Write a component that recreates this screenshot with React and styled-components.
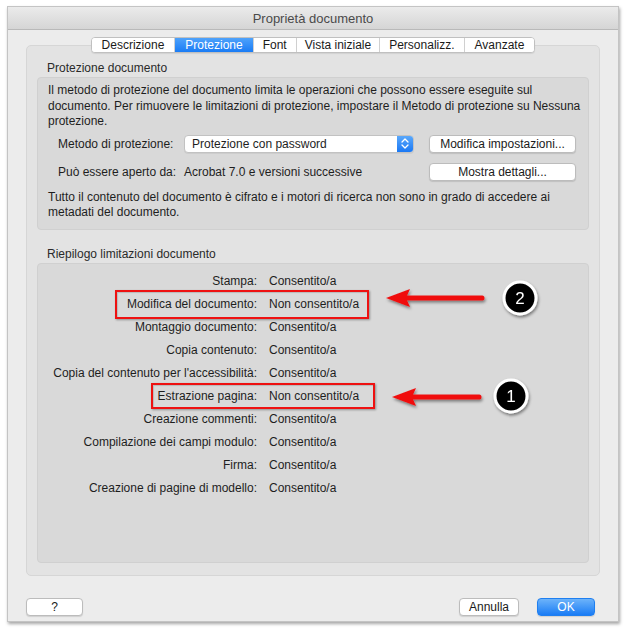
import React from "react";
import styled, { createGlobalStyle } from "styled-components";

const Global = createGlobalStyle`
  html, body { margin: 0; padding: 0; background: #ffffff; }
  body {
    font-family: "Liberation Sans", Arial, sans-serif;
    font-size: 12px;
    color: #1e1e1e;
  }
  #root { padding: 6px 7px 8px 7px; }
`;

const Window = styled.div`
  width: 612px;
  height: 616px;
  box-sizing: border-box;
  background: #ececec;
  border: 1px solid #c4c4c4;
  box-shadow: 1px 2px 3px rgba(0, 0, 0, 0.35);
  display: flex;
  flex-direction: column;
  position: relative;
`;

const TitleBar = styled.div`
  height: 22px;
  flex: none;
  background: linear-gradient(#ebebeb, #d5d5d5);
  border-bottom: 1px solid #b9b9b9;
  display: flex;
  align-items: center;
  justify-content: center;
  font-size: 13px;
  color: #4a4a4a;
`;

const Body = styled.div`
  flex: 1;
  display: flex;
  flex-direction: column;
  padding: 7px 18px 0 18px;
`;

const TabStrip = styled.div`
  display: flex;
  justify-content: center;
  position: relative;
  z-index: 2;
  margin-bottom: -8px;
`;

const TabGroup = styled.div`
  display: flex;
  background: #fff;
  border: 1px solid #c0c0c0;
  border-radius: 4px;
  overflow: hidden;
  box-shadow: 0 1px 1px rgba(0, 0, 0, 0.08);
`;

const Tab = styled.div`
  height: 14px;
  padding: 0 ${(p) => p.$pad}px;
  display: flex;
  align-items: center;
  font-size: 12px;
  color: ${(p) => (p.$active ? "#ffffff" : "#1a1a1a")};
  background: ${(p) => (p.$active ? "linear-gradient(#4ea2fb, #1a7cf5)" : "#ffffff")};
  border-left: ${(p) => (p.$first ? "none" : "1px solid #d0d0d0")};
`;

const Panel = styled.div`
  height: 531px;
  flex: none;
  box-sizing: border-box;
  background: #e3e3e3;
  border: 1px solid #d6d6d6;
  border-radius: 5px;
  padding: 15px 10px 0 10px;
  display: flex;
  flex-direction: column;
`;

const SectionLabel = styled.div`
  padding-left: 10px;
  height: 15px;
  line-height: 15px;
  margin-bottom: 1px;
  color: #2a2a2a;
`;

const GroupBox = styled.div`
  background: #d9d9d9;
  border: 1px solid #d0d0d0;
  border-radius: 4px;
  box-sizing: border-box;
  height: ${(p) => p.$h}px;
  padding: ${(p) => p.$pad};
  position: relative;
  margin-bottom: ${(p) => p.$mb || 0}px;
`;

const Para = styled.p`
  margin: 0 -6px 0 0;
  line-height: 15.5px;
`;

const FormGrid = styled.div`
  display: grid;
  grid-template-columns: 126px 230px 147px;
  column-gap: 0;
  row-gap: 10px;
  padding-left: 10px;
  margin: 5px 0 9px 0;
  align-items: center;
`;

const FieldLabel = styled.div`
  line-height: 18px;
  white-space: nowrap;
`;

const FieldValue = styled.div`
  line-height: 18px;
  white-space: nowrap;
`;

const Select = styled.div`
  height: 18px;
  box-sizing: border-box;
  background: #fff;
  border: 1px solid #c2c2c2;
  border-radius: 4px;
  display: flex;
  align-items: stretch;
  overflow: hidden;
  box-shadow: 0 1px 0 rgba(0, 0, 0, 0.05);
`;

const SelectText = styled.div`
  flex: 1;
  padding-left: 7px;
  line-height: 16px;
`;

const Stepper = styled.div`
  width: 16px;
  background: linear-gradient(#5aa8fb, #1a78f4);
  display: flex;
  align-items: center;
  justify-content: center;
`;

const Button = styled.div`
  height: 18px;
  width: ${(p) => p.$w}px;
  margin-left: ${(p) => p.$ml || 0}px;
  box-sizing: border-box;
  background: ${(p) => (p.$primary ? "linear-gradient(#6cb3fa, #1a7cf5)" : "#ffffff")};
  border: 1px solid ${(p) => (p.$primary ? "#1f7ff0" : "#bcbcbc")};
  border-radius: 4px;
  display: flex;
  align-items: center;
  justify-content: center;
  color: ${(p) => (p.$primary ? "#ffffff" : "#1a1a1a")};
  box-shadow: 0 1px 1px rgba(0, 0, 0, 0.12);
  font-size: 12px;
  white-space: nowrap;
`;

const SummaryList = styled.div`
  display: flex;
  flex-direction: column;
  padding-top: 5px;
`;

const SummaryRow = styled.div`
  display: grid;
  grid-template-columns: 219px 1fr;
  column-gap: 12px;
  height: 23px;
  align-items: center;
  position: relative;
`;

const SummaryLabel = styled.div`
  text-align: right;
  white-space: nowrap;
`;

const Highlight = styled.div`
  position: absolute;
  left: ${(p) => p.$l}px;
  width: ${(p) => p.$w}px;
  top: ${(p) => p.$t}px;
  height: ${(p) => p.$h}px;
  border: 2px solid #ee1111;
  box-sizing: border-box;
  box-shadow: 1px 1px 2px rgba(0, 0, 0, 0.35), inset 1px 1px 1px rgba(0, 0, 0, 0.15);
  pointer-events: none;
`;

const Annotations = styled.svg`
  position: absolute;
  left: 0;
  top: 0;
  overflow: visible;
  pointer-events: none;
`;

const Footer = styled.div`
  display: flex;
  align-items: center;
  padding: 0 5px 0 0;
  margin-top: 22px;
`;

const Spacer = styled.div`
  flex: 1;
`;

const FooterButtons = styled.div`
  display: flex;
  gap: 18px;
`;

const rows = [
  ["Stampa:", "Consentito/a"],
  ["Modifica del documento:", "Non consentito/a", { l: 77, w: 254, t: -14, h: 29 }],
  ["Montaggio documento:", "Consentito/a"],
  ["Copia contenuto:", "Consentito/a"],
  ["Copia del contenuto per l'accessibilità:", "Consentito/a"],
  ["Estrazione pagina:", "Non consentito/a", { l: 113, w: 224, t: -13, h: 26 }],
  ["Creazione commenti:", "Consentito/a"],
  ["Compilazione dei campi modulo:", "Consentito/a"],
  ["Firma:", "Consentito/a"],
  ["Creazione di pagine di modello:", "Consentito/a"],
];

const tabs = [
  ["Descrizione", 10],
  ["Protezione", 10],
  ["Font", 9],
  ["Vista iniziale", 8],
  ["Personalizz.", 9],
  ["Avanzate", 10],
];

function Arrow({ tipX, tailX, y }) {
  return (
    <g filter="url(#ashadow)">
      <line x1={tailX} y1={y} x2={tipX + 18} y2={y} stroke="#f01010" strokeWidth="5" strokeLinecap="round" />
      <polygon points={`${tipX},${y} ${tipX + 24},${y - 9} ${tipX + 20},${y} ${tipX + 24},${y + 9}`} fill="#f01010" />
    </g>
  );
}

function Badge({ cx, cy, n }) {
  return (
    <g filter="url(#ashadow)">
      <circle cx={cx} cy={cy} r="16" fill="#050505" stroke="#ffffff" strokeWidth="3" />
      <text x={cx} y={cy + 6} textAnchor="middle" fill="#ffffff" fontSize="17" fontFamily="Liberation Sans, Arial, sans-serif">
        {n}
      </text>
    </g>
  );
}

export default function App() {
  return (
    <>
      <Global />
      <Window>
        <TitleBar>Proprietà documento</TitleBar>
        <Body>
          <TabStrip>
            <TabGroup>
              {tabs.map(([t, pad], i) => (
                <Tab key={t} $pad={pad} $first={i === 0} $active={t === "Protezione"}>
                  {t}
                </Tab>
              ))}
            </TabGroup>
          </TabStrip>
          <Panel>
            <SectionLabel>Protezione documento</SectionLabel>
            <GroupBox $h={153} $pad="5px 10px 0 10px" $mb={17}>
              <Para>
                Il metodo di protezione del documento limita le operazioni che possono essere eseguite sul
                documento. Per rimuovere le limitazioni di protezione, impostare il Metodo di protezione su Nessuna
                protezione.
              </Para>
              <FormGrid>
                <FieldLabel>Metodo di protezione:</FieldLabel>
                <Select>
                  <SelectText>Protezione con password</SelectText>
                  <Stepper>
                    <svg width="8" height="11" viewBox="0 0 8 11">
                      <path d="M1 4 L4 1 L7 4 M1 7 L4 10 L7 7" fill="none" stroke="#fff" strokeWidth="1.3" strokeLinecap="round" strokeLinejoin="round" />
                    </svg>
                  </Stepper>
                </Select>
                <Button $w={147} $ml={15}>Modifica impostazioni...</Button>
                <FieldLabel>Può essere aperto da:</FieldLabel>
                <FieldValue>Acrobat 7.0 e versioni successive</FieldValue>
                <Button $w={147} $ml={15}>Mostra dettagli...</Button>
              </FormGrid>
              <Para>
                Tutto il contenuto del documento è cifrato e i motori di ricerca non sono in grado di accedere ai
                metadati del documento.
              </Para>
            </GroupBox>
            <SectionLabel>Riepilogo limitazioni documento</SectionLabel>
            <GroupBox $h={300} $pad="0">
              <SummaryList>
                {rows.map(([l, v, hl]) => (
                  <SummaryRow key={l}>
                    <SummaryLabel>{l}</SummaryLabel>
                    <div>{v}</div>
                    {hl && <Highlight $l={hl.l} $w={hl.w} $t={11.5 + hl.t} $h={hl.h} />}
                  </SummaryRow>
                ))}
              </SummaryList>
              <Annotations width="550" height="300">
                <defs>
                  <filter id="ashadow" x="-30%" y="-50%" width="160%" height="200%">
                    <feDropShadow dx="1" dy="2" stdDeviation="1.5" floodColor="#000" floodOpacity="0.45" />
                  </filter>
                </defs>
                <Arrow tipX={348} tailX={444} y={34} />
                <Badge cx={482} cy={34} n="2" />
                <Arrow tipX={354} tailX={441} y={133} />
                <Badge cx={473} cy={132} n="1" />
              </Annotations>
            </GroupBox>
          </Panel>
          <Footer>
            <Button $w={57}>?</Button>
            <Spacer />
            <FooterButtons>
              <Button $w={60}>Annulla</Button>
              <Button $w={58} $primary>OK</Button>
            </FooterButtons>
          </Footer>
        </Body>
      </Window>
    </>
  );
}
